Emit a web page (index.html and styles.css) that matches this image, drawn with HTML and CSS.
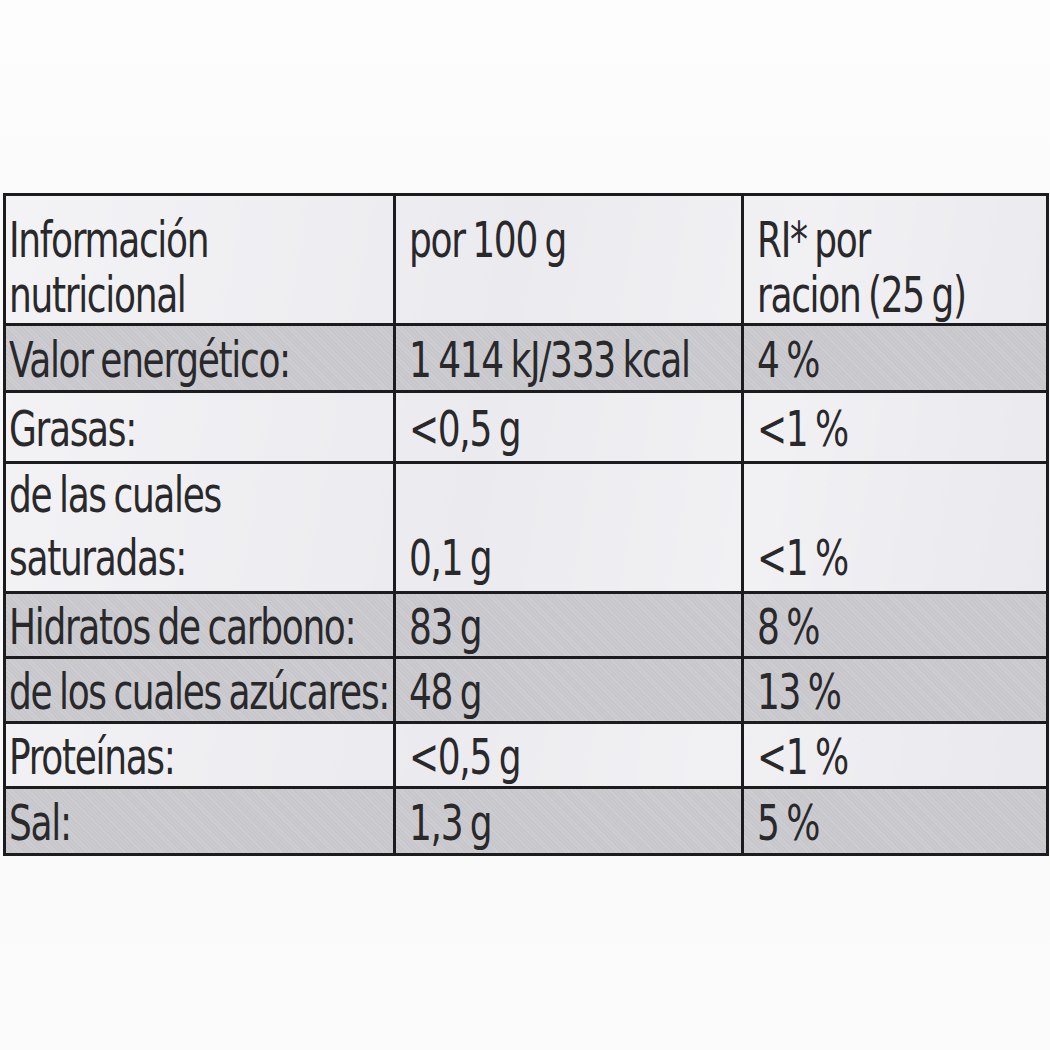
FILE: index.html
```html
<!DOCTYPE html>
<html lang="es">
<head>
    <meta charset="UTF-8">
    <meta name="viewport" content="width=device-width, initial-scale=1.0">
    <title>Información nutricional</title>
    <link rel="stylesheet" href="styles.css">
</head>
<body>
    <div class="label">
        <table class="nutri">
            <colgroup>
                <col class="c-name">
                <col class="c-100">
                <col class="c-ri">
            </colgroup>
            <tr class="head">
                <td><span class="t">Información<br>nutricional</span></td>
                <td><span class="t">por 100 g</span></td>
                <td><span class="t">RI* por<br>racion (25 g)</span></td>
            </tr>
            <tr class="shade">
                <td><span class="t">Valor energético:</span></td>
                <td><span class="t">1 414 kJ/333 kcal</span></td>
                <td><span class="t">4 %</span></td>
            </tr>
            <tr class="tall">
                <td><span class="t">Grasas:</span></td>
                <td><span class="t">&lt;0,5 g</span></td>
                <td><span class="t">&lt;1 %</span></td>
            </tr>
            <tr class="bottom">
                <td><span class="t">de las cuales<br>saturadas:</span></td>
                <td><span class="t">0,1 g</span></td>
                <td><span class="t">&lt;1 %</span></td>
            </tr>
            <tr class="shade short">
                <td><span class="t">Hidratos de carbono:</span></td>
                <td><span class="t">83 g</span></td>
                <td><span class="t">8 %</span></td>
            </tr>
            <tr class="shade short">
                <td><span class="t">de los cuales azúcares:</span></td>
                <td><span class="t">48 g</span></td>
                <td><span class="t">13 %</span></td>
            </tr>
            <tr class="short">
                <td><span class="t">Proteínas:</span></td>
                <td><span class="t">&lt;0,5 g</span></td>
                <td><span class="t">&lt;1 %</span></td>
            </tr>
            <tr class="shade">
                <td><span class="t">Sal:</span></td>
                <td><span class="t">1,3 g</span></td>
                <td><span class="t">5 %</span></td>
            </tr>
        </table>
    </div>
</body>
</html>
```

FILE: styles.css
```css
* {
    margin: 0;
    padding: 0;
    box-sizing: border-box;
}
body {
    width: 1050px;
    height: 1050px;
    overflow: hidden;
    background: linear-gradient(180deg, #fdfdfd 0%, #f7f7f8 45%, #fbfbfb 100%);
    font-family: 'DejaVu Sans Condensed', 'DejaVu Sans', sans-serif;
    color: #29292b;
}
.label {
    padding-top: 193px;
    padding-left: 3px;
}
.nutri {
    border-collapse: collapse;
    table-layout: fixed;
    width: 1043px;
    background: linear-gradient(100deg, #f3f3f6 0%, #ebebef 45%, #f1f1f4 70%, #e8e8ed 100%);
}
.c-name { width: 390px; }
.c-100 { width: 348px; }
.c-ri { width: 305px; }
.nutri td {
    height: 67px;
    border: 3px solid #1c1c1e;
    font-size: 49px;
    line-height: 57px;
    letter-spacing: -1.6px;
    word-spacing: -3px;
    vertical-align: middle;
    padding: 5px 4px 0 13px;
    white-space: nowrap;
    overflow: hidden;
}
.nutri td:first-child {
    padding-left: 3px;
}
.t {
    display: inline-block;
    transform: scaleX(0.815);
    transform-origin: 0 50%;
}
.head td {
    height: 130px;
    line-height: 55px;
    vertical-align: top;
    padding-top: 17px;
}
.tall td {
    height: 71px;
}
.short td {
    height: 65px;
}
.bottom td {
    height: 122px;
    line-height: 63px;
    vertical-align: bottom;
    padding-top: 0;
    padding-bottom: 1px;
}
.shade td {
    background-color: #c6c6cb;
    background-image: repeating-linear-gradient(45deg, rgba(255,255,255,0.18) 0 1px, transparent 1px 3px);
}
```
